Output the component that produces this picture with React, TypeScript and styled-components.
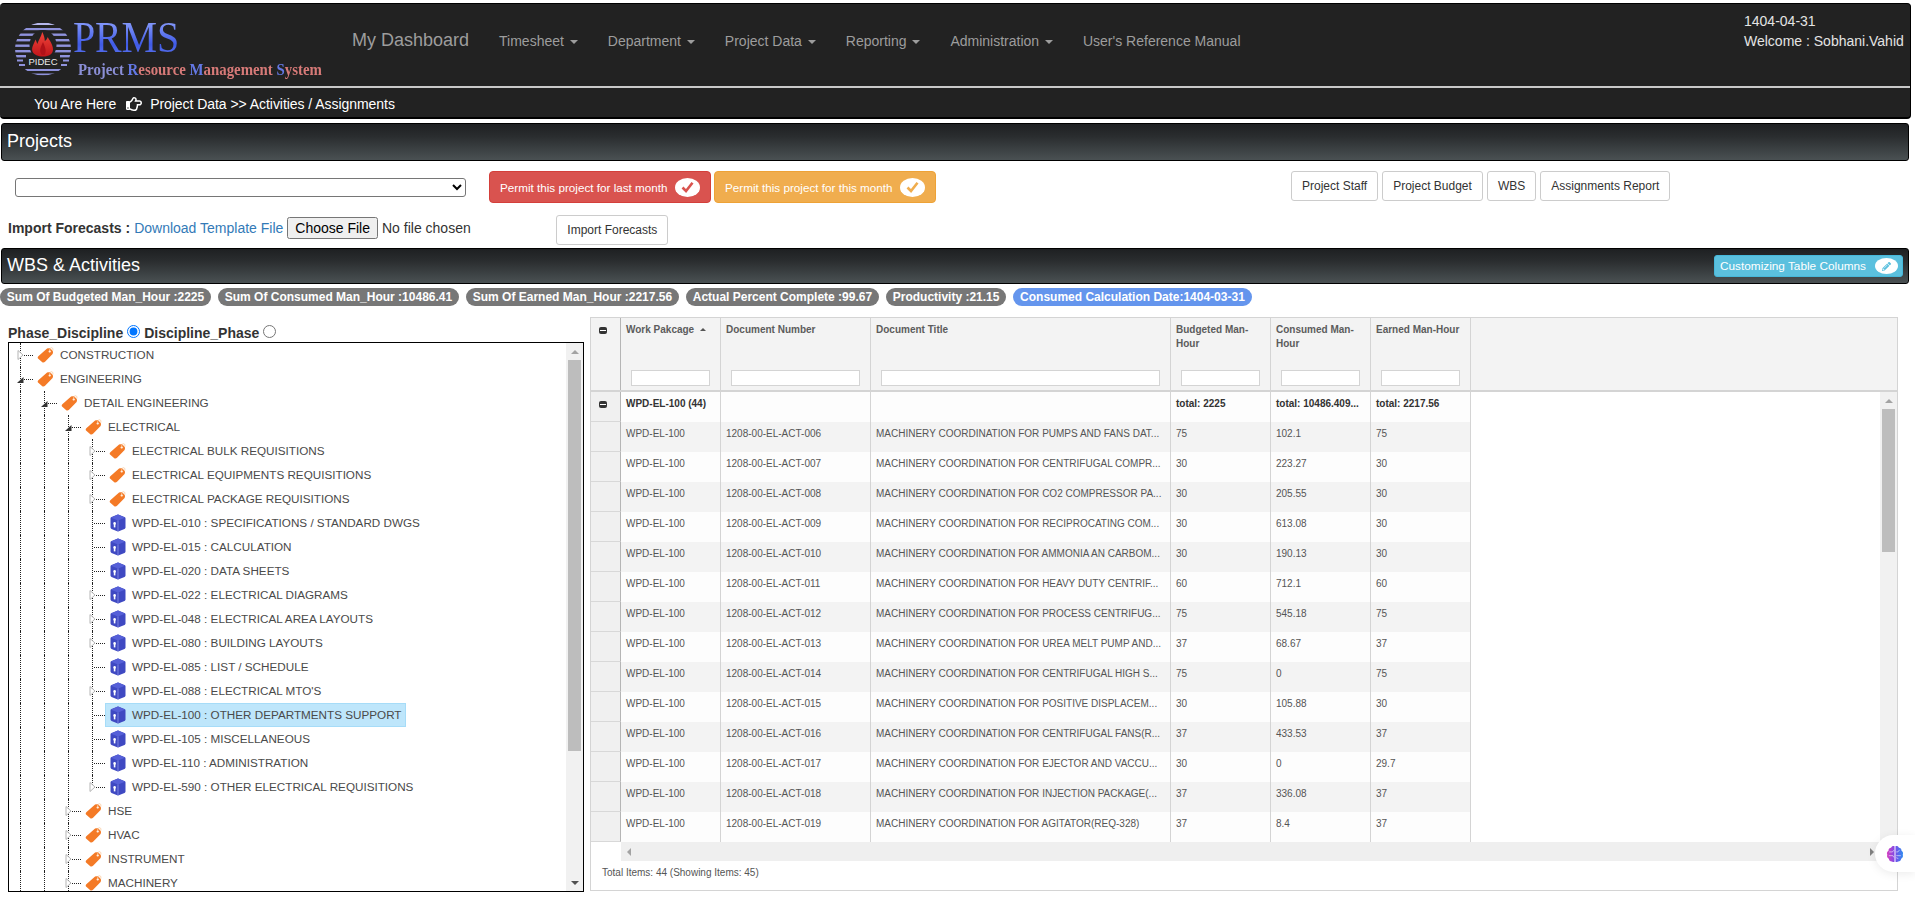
import React from 'react';
import styled, { createGlobalStyle } from 'styled-components';
import { FaRegHandPointRight, FaPencilAlt } from 'react-icons/fa';

const Global = createGlobalStyle`
  html, body { margin: 0; padding: 0; background: #fff; overflow: hidden; }
  body { font-family: "Liberation Sans", Arial, sans-serif; font-size: 14px; color: #333; }
  * { box-sizing: border-box; }
`;

const Page = styled.div`
  padding-top: 3px;
  width: 1915px;
  height: 901px;
`;

const Header = styled.header`
  background: #222;
  border: 1px solid #000;
  border-width: 1px 1px 2px 0;
  border-radius: 4px;
  height: 116px;
  margin-right: 4px;
  display: flex;
  flex-direction: column;
`;
const NavRow = styled.div`
  height: 82px;
  display: flex;
  align-items: flex-start;
`;
const LogoBox = styled.div`
  width: 337px;
  height: 82px;
  flex: none;
  padding: 18px 0 0 15px;
  display: flex;
`;
const LogoWords = styled.div`
  margin-left: 1px;
  display: flex;
  flex-direction: column;
`;
const Prms = styled.div`
  font-family: "Liberation Serif", serif;
  font-size: 40px;
  line-height: 36px;
  height: 37px;
  background: linear-gradient(180deg, #93a6ff 0%, #3f5ae6 65%, #6078ee 100%);
  -webkit-background-clip: text;
  background-clip: text;
  color: transparent;
  letter-spacing: -0.2px;
  transform: scaleY(1.12);
  transform-origin: center bottom;
`;
const LogoTag = styled.div`
  font-family: "Liberation Serif", serif;
  font-weight: 700;
  font-size: 17px;
  line-height: 19px;
  margin: 1px 0 0 5px;
  white-space: nowrap;
  transform: scaleX(0.873);
  transform-origin: left center;
`;
const TagBlue = styled.span` color: #6478e4; `;
const TagViolet = styled.span` color: #8b8fd6; `;
const TagRose = styled.span` color: #d77a78; `;
const Brand = styled.a`
  font-size: 18px;
  color: #9d9d9d;
  padding: 0 15px;
  line-height: 20px;
  margin-top: 26px;
  white-space: nowrap;
`;
const NavLink = styled.a`
  font-size: 14px;
  color: #9d9d9d;
  padding: 0 15px;
  line-height: 20px;
  margin-top: 27px;
  white-space: nowrap;
`;
const Caret = styled.span`
  display: inline-block;
  width: 0;
  height: 0;
  margin-left: 2px;
  vertical-align: middle;
  border-top: 4px solid #9d9d9d;
  border-left: 4px solid transparent;
  border-right: 4px solid transparent;
`;
const UserBox = styled.div`
  margin-left: auto;
  padding: 7px 0 0 0;
  width: 166px;
  color: #e4e4e4;
  font-size: 14px;
  line-height: 20px;
  white-space: nowrap;
`;
const Rule = styled.div`
  height: 2px;
  background: #c8c8c8;
`;
const Crumbs = styled.div`
  flex: 1;
  display: flex;
  align-items: center;
  padding: 2px 0 0 34px;
  color: #fff;
  font-size: 14px;
  letter-spacing: -0.05px;
  white-space: nowrap;
`;
const HandIcon = styled(FaRegHandPointRight)`
  margin: 0 8px 0 10px;
  width: 16px;
  height: 16px;
`;

const SectionBar = styled.div<{ $h: number; $top: number }>`
  height: ${p => p.$h}px;
  margin: ${p => p.$top}px 6px 0 1px;
  border: 1px solid #000;
  border-radius: 3px;
  background: linear-gradient(180deg, #1e2022 0%, #2a2d2f 35%, #4a5153 100%);
  color: #fff;
  font-size: 18px;
  line-height: 20px;
  display: flex;
  align-items: center;
  justify-content: space-between;
  padding: 0 5px 2px 5px;
`;

const ProjectRow = styled.div`
  display: flex;
  align-items: flex-start;
  padding: 10px 0 0 15px;
`;
const ProjectSelect = styled.select`
  width: 451px;
  height: 19px;
  margin: 7px 23px 0 0;
  border: 1px solid #767676;
  border-radius: 3px;
  background: #fff;
  font-size: 12px;
`;
const PermitButton = styled.button<{ $bg: string; $line: string }>`
  width: 222px;
  height: 32px;
  margin-right: 3px;
  border: 1px solid ${p => p.$line};
  border-radius: 4px;
  background: ${p => p.$bg};
  color: #fff;
  font: 11.7px "Liberation Sans", Arial, sans-serif;
  display: flex;
  align-items: center;
  justify-content: space-between;
  padding: 0 10px;
  white-space: nowrap;
`;
const Oval = styled.span<{ $w: number; $h: number }>`
  width: ${p => p.$w}px;
  height: ${p => p.$h}px;
  border-radius: 50%;
  background: #fff;
  display: flex;
  align-items: center;
  justify-content: center;
  flex: none;
`;
const ActionGroup = styled.div`
  margin-left: 352px;
  display: flex;
  gap: 4px;
`;
const PlainButton = styled.button`
  height: 30px;
  padding: 0 10px;
  border: 1px solid #ccc;
  border-radius: 3px;
  background: #fff;
  color: #333;
  font: 12px "Liberation Sans", Arial, sans-serif;
  white-space: nowrap;
`;
const ImportRow = styled.div`
  display: flex;
  align-items: flex-start;
  padding: 12px 0 0 8px;
  height: 45px;
`;
const ImportLabel = styled.b`
  font-size: 14px;
  line-height: 22px;
  margin-top: 2px;
  color: #333;
  white-space: nowrap;
`;
const TemplateLink = styled.a`
  color: #337ab7;
  font-size: 14px;
  line-height: 24px;
  margin: 1px 4px 0 4px;
  white-space: nowrap;
`;
const FileInput = styled.input`
  width: 259px;
  font: 14px "Liberation Sans", Arial, sans-serif;
  margin: 2px 0 0;
  color: #333;
`;
const ImportWrap = styled.div`
  margin-left: 10px;
`;
const ImportBtn = styled(PlainButton)`
  width: 112px;
`;
const CustomButton = styled.button`
  width: 189px;
  height: 22px;
  margin-top: 2px;
  border: 1px solid #46b8da;
  border-radius: 3px;
  background: #5bc0de;
  color: #fff;
  font: 11.8px "Liberation Sans", Arial, sans-serif;
  display: flex;
  align-items: center;
  justify-content: space-between;
  padding: 0 4px 0 5px;
  white-space: nowrap;
`;
const PillRow = styled.div`
  display: flex;
  gap: 7px;
  margin-top: 4px;
  height: 18px;
`;
const Pill = styled.span<{ $blue?: boolean }>`
  background: ${p => (p.$blue ? '#6495ed' : '#777')};
  color: #fff;
  font-weight: 700;
  font-size: 12px;
  line-height: 18px;
  padding: 0 6.8px;
  border-radius: 9px;
  white-space: nowrap;
`;

const Main = styled.div`
  display: flex;
  margin-top: 11px;
  padding-left: 8px;
  align-items: flex-start;
`;
const LeftColumn = styled.div`
  width: 576px;
  flex: none;
`;
const ModeRow = styled.div`
  height: 25px;
  display: flex;
  align-items: flex-end;
  font-size: 14px;
  font-weight: 700;
  color: #333;
  line-height: 18px;
`;
const ModeRadio = styled.input`
  width: 13px;
  height: 13px;
  margin: 0 4px 4px 4px;
`;
const TreeBox = styled.div`
  height: 550px;
  border: 1px solid #000;
  display: flex;
  background: #fff;
`;
const TreeBody = styled.div`
  flex: 1;
  overflow: hidden;
  padding-left: 11px;
`;
const TreeRow = styled.div`
  height: 24px;
  display: flex;
  align-items: center;
`;
const Guide = styled.span`
  width: 24px;
  height: 24px;
  flex: none;
  border-left: 1px dotted #222;
`;
const Connector = styled.span<{ $last?: boolean }>`
  position: relative;
  width: 13px;
  height: 24px;
  flex: none;
  display: flex;
  align-items: center;
  &::before {
    content: '';
    position: absolute;
    left: 0;
    top: 0;
    bottom: ${p => (p.$last ? '12px' : '0')};
    border-left: 1px dotted #222;
  }
`;
const Stub = styled.span`
  display: block;
  margin-left: 2px;
  width: 11px;
  border-top: 1px dotted #222;
`;
const Expander = styled.svg`
  position: absolute;
  left: -3px;
  top: 6px;
`;
const TreeNode = styled.span<{ $on?: boolean }>`
  height: 24px;
  display: flex;
  align-items: center;
  gap: 6px;
  padding: 0 3px 1px 4px;
  border: 1px solid ${p => (p.$on ? '#a6dcf8' : 'transparent')};
  background: ${p => (p.$on ? '#bee6fb' : 'transparent')};
  font-size: 11.7px;
  color: #4a4a4a;
  white-space: nowrap;
`;

const VBar = styled.div`
  width: 17px;
  flex: none;
  background: #f1f1f1;
  display: flex;
  flex-direction: column;
  align-items: center;
`;
const ArrowCell = styled.div`
  width: 17px;
  height: 17px;
  flex: none;
  display: flex;
  align-items: center;
  justify-content: center;
`;
const ArrowUp = styled.span<{ $dim?: boolean }>`
  border-left: 4px solid transparent;
  border-right: 4px solid transparent;
  border-bottom: 4px solid ${p => (p.$dim ? '#a3a3a3' : '#505050')};
`;
const ArrowDown = styled.span`
  border-left: 4px solid transparent;
  border-right: 4px solid transparent;
  border-top: 4px solid #505050;
`;
const ArrowLeft = styled.span`
  border-top: 4px solid transparent;
  border-bottom: 4px solid transparent;
  border-right: 4px solid #a3a3a3;
`;
const ArrowRight = styled.span`
  border-top: 4px solid transparent;
  border-bottom: 4px solid transparent;
  border-left: 4px solid #808080;
`;
const Thumb = styled.div<{ $h: number }>`
  width: 13px;
  height: ${p => p.$h}px;
  background: #bdbdbd;
  flex: none;
`;
const BarFill = styled.div`
  flex: 1;
`;

const Grid = styled.div`
  width: 1308px;
  height: 574px;
  margin-left: 6px;
  flex: none;
  border: 1px solid #d4d4d4;
  background: #fff;
  display: flex;
  flex-direction: column;
`;
const HeadRow = styled.div`
  height: 74px;
  flex: none;
  display: flex;
  background: #f3f3f3;
  border-bottom: 2px solid #d4d4d4;
`;
const SelHead = styled.div`
  width: 30px;
  flex: none;
  border-right: 1px solid #b5b5b5;
  padding: 9px 0 0 8px;
`;
const Minus = styled.span`
  display: block;
  width: 8px;
  height: 7px;
  border-radius: 2px;
  background: #333;
  position: relative;
  &::after {
    content: '';
    position: absolute;
    left: 1px;
    right: 1px;
    top: 3px;
    height: 1px;
    background: #fff;
  }
`;
const HeadCell = styled.div<{ $w: number }>`
  width: ${p => p.$w}px;
  flex: none;
  border-right: 1px solid #d4d4d4;
  padding: 5px 0 4px;
  display: flex;
  flex-direction: column;
  justify-content: space-between;
`;
const HeadLabel = styled.div`
  padding: 0 5px;
  font-size: 10px;
  line-height: 14px;
  font-weight: 700;
  color: #5c5c5c;
`;
const SortMark = styled.span`
  display: inline-block;
  margin-left: 6px;
  vertical-align: 2px;
  border-left: 3px solid transparent;
  border-right: 3px solid transparent;
  border-bottom: 3px solid #555;
`;
const FilterInput = styled.input`
  display: block;
  margin: 0 10px;
  width: calc(100% - 20px);
  height: 16px;
  border: 1px solid #d4d4d4;
  background: #fff;
  padding: 0 2px;
`;
const GridBody = styled.div`
  display: flex;
  height: 469px;
  flex: none;
`;
const RowsArea = styled.div`
  flex: 1;
  min-width: 0;
  display: flex;
  flex-direction: column;
`;
const Rows = styled.div`
  height: 450px;
  overflow: hidden;
`;
const DataRow = styled.div`
  height: 30px;
  display: flex;
`;
const SelCell = styled.div<{ $group?: boolean }>`
  width: 30px;
  flex: none;
  background: #f0f0f0;
  border-right: 1px solid #b5b5b5;
  border-bottom: 1px solid #d8d8d8;
  padding: ${p => (p.$group ? '9px 0 0 8px' : '0')};
`;
const Cell = styled.div<{ $w: number; $shade?: boolean; $bold?: boolean }>`
  width: ${p => p.$w}px;
  flex: none;
  border-right: 1px solid #d4d4d4;
  background: ${p => (p.$shade ? '#f3f3f3' : '#fdfdfd')};
  padding: 5px 5px 0;
  font-size: 10px;
  line-height: 14px;
  color: ${p => (p.$bold ? '#333' : '#555')};
  font-weight: ${p => (p.$bold ? 700 : 400)};
  white-space: nowrap;
  overflow: hidden;
`;
const HBar = styled.div`
  height: 19px;
  margin-left: 30px;
  background: #efefef;
  display: flex;
  align-items: center;
  justify-content: space-between;
  padding: 0 6px;
`;
const GridFooter = styled.div`
  flex: 1;
  padding: 5px 0 0 11px;
  font-size: 10px;
  line-height: 14px;
  color: #555;
`;

const BrainBadge = styled.div`
  position: fixed;
  right: 0;
  top: 835px;
  width: 40px;
  height: 37px;
  background: #fff;
  border-radius: 19px 0 0 19px;
  box-shadow: 0 2px 10px rgba(0, 0, 0, 0.08);
  display: flex;
  align-items: center;
  padding-left: 10px;
`;

const TagIcon = () => (
  <svg width="17" height="16" viewBox="0 0 17 16" style={{ flex: 'none', marginLeft: -1 }}>
    <path d="M1.300 9.200 9.800 1.800C10.300 1.400 12.700 1 13.400 1.500L15.800 4C16.200 4.600 16 6.300 15.600 7L8.300 14.600C7 15.800 5.900 15.800 5 15L1.300 11.800C.5 11 .5 10 1.300 9.200z" fill="#f47a26" />
    <circle cx="12.700" cy="4.500" r="1.100" fill="#fff" />
    <path d="M12.700 4.500C12.300 2 13.500.4 14.800.7 16 1 16.400 2.600 15.400 4.200" fill="none" stroke="#fbd3ad" strokeWidth="0.9" />
  </svg>
);

const BoxIcon = () => (
  <svg width="16" height="18" viewBox="0 0 16 18" style={{ flex: 'none' }}>
    <path d="M7.200.7a2 2 0 0 1 1.600 0l5.700 2.200c.6.2 1 .8 1 1.400v9.300c0 .6-.4 1.200-1 1.400l-5.700 2.300a2 2 0 0 1-1.600 0l-5.700-2.300c-.6-.2-1-.8-1-1.400V4.300c0-.6.4-1.200 1-1.400z" fill="#3f49c2" />
    <path d="M1 3.700 7.200.7a2 2 0 0 1 1.600 0L15 3.700 8 6.500z" fill="#5660d8" />
    <path d="M8 6.500V17" fill="none" stroke="#8e96ea" strokeWidth="0.8" />
    <circle cx="4.600" cy="9.400" r="1.300" fill="#fff" />
    <rect x="3.800" y="9.700" width="1.600" height="3.700" fill="#fff" />
  </svg>
);

const CheckMark = ({ color }: { color: string }) => (
  <svg width="13" height="12" viewBox="0 0 13 12">
    <path d="M1.500 6.500 5 10 11.500 1.800" fill="none" stroke={color} strokeWidth="2.600" />
  </svg>
);

const LogoMark = () => (
  <svg width="57" height="54" viewBox="0 0 57 54" style={{ flex: 'none' }}>
    <defs>
      <clipPath id="disc"><ellipse cx="28" cy="27" rx="28" ry="26.500" /></clipPath>
      <linearGradient id="flame" x1="0" x2="0" y1="0" y2="1">
        <stop offset="0" stopColor="#f0443a" />
        <stop offset="1" stopColor="#c0161a" />
      </linearGradient>
    </defs>
    <g clipPath="url(#disc)" fill="#8f92dc">
      <rect x="0" y="1" width="57" height="2" fill="#b6b8ec" />
      <rect x="0" y="6" width="57" height="2.200" />
      <rect x="0" y="11.500" width="57" height="2.400" />
      <rect x="0" y="17" width="57" height="2.400" />
      <rect x="0" y="22.500" width="57" height="2.400" />
      <rect x="0" y="28" width="57" height="2.400" />
      <rect x="0" y="33" width="57" height="2.400" />
      <rect x="0" y="47" width="57" height="2" />
      <rect x="0" y="51.500" width="57" height="1.800" />
    </g>
    <ellipse cx="28" cy="23" rx="13.500" ry="15" fill="#222" />
    <rect x="11" y="33" width="34" height="14" fill="#222" />
    <path d="M2 38.500h6M48 38.500h6M4 43h6M46 43h6" stroke="#8f92dc" strokeWidth="2" />
    <path d="M17.500 29.500C16 25 19.500 21 20.500 17.500 21.300 19 21.800 20.500 22.300 22 23.500 18 26 15 27.300 10 29 13.500 29.700 16 29.800 19 31.300 18 32.300 16.500 32.800 15 34 18 38 22 38 27.500 38 32 34 34.500 28 34.500 23 34.500 19 33 17.500 29.500z" fill="url(#flame)" />
    <path d="M27 33C24 30 25 26 28 20 30 25 32 29 29.500 33z" fill="#b01218" />
    <text x="28" y="42.500" textAnchor="middle" fontSize="9.500" fill="#ececec" fontFamily="Liberation Sans, Arial, sans-serif">PIDEC</text>
  </svg>
);

const BrainIcon = () => (
  <svg width="20" height="20" viewBox="0 0 24 24">
    <defs>
      <linearGradient id="brainFill" x1="0" x2="1" y1="0" y2="0">
        <stop offset="0" stopColor="#d63fc0" />
        <stop offset="0.5" stopColor="#7a4be8" />
        <stop offset="1" stopColor="#2f8df0" />
      </linearGradient>
    </defs>
    <path
      fill="url(#brainFill)"
      d="M11.400 2.600C9.700 1.900 7.900 2.800 7.300 4.400 5.300 4.500 3.900 6.200 4.200 8.100 2.500 9 1.800 11.100 2.700 12.800 1.900 14.700 2.800 16.800 4.600 17.600 4.700 19.700 6.500 21.200 8.500 20.900 9.400 21.900 10.500 21.900 11.400 21.200ZM12.600 2.600C14.300 1.900 16.100 2.800 16.700 4.400 18.700 4.500 20.100 6.200 19.800 8.100 21.500 9 22.200 11.100 21.300 12.800 22.100 14.700 21.200 16.800 19.400 17.600 19.300 19.700 17.500 21.200 15.500 20.900 14.600 21.900 13.500 21.900 12.600 21.200Z"
    />
    <path d="M5 9.500h4l1.500-2M4.500 14h5l1 2M17.500 7l-2 2.500h-2M19 14h-5.500M16 17.500l-2.500-1" fill="none" stroke="#fff" strokeWidth="0.9" opacity="0.75" />
  </svg>
);

type Exp = 'open' | 'closed' | undefined;
type Node = { label: string; depth: number; kind: 'tag' | 'box'; exp?: Exp; last?: boolean; on?: boolean };

const tree: Node[] = [
  { label: 'CONSTRUCTION', depth: 0, kind: 'tag', exp: 'closed' },
  { label: 'ENGINEERING', depth: 0, kind: 'tag', exp: 'open' },
  { label: 'DETAIL ENGINEERING', depth: 1, kind: 'tag', exp: 'open' },
  { label: 'ELECTRICAL', depth: 2, kind: 'tag', exp: 'open' },
  { label: 'ELECTRICAL BULK REQUISITIONS', depth: 3, kind: 'tag', exp: 'closed' },
  { label: 'ELECTRICAL EQUIPMENTS REQUISITIONS', depth: 3, kind: 'tag', exp: 'closed' },
  { label: 'ELECTRICAL PACKAGE REQUISITIONS', depth: 3, kind: 'tag', exp: 'closed' },
  { label: 'WPD-EL-010 : SPECIFICATIONS / STANDARD DWGS', depth: 3, kind: 'box' },
  { label: 'WPD-EL-015 : CALCULATION', depth: 3, kind: 'box' },
  { label: 'WPD-EL-020 : DATA SHEETS', depth: 3, kind: 'box' },
  { label: 'WPD-EL-022 : ELECTRICAL DIAGRAMS', depth: 3, kind: 'box', exp: 'closed' },
  { label: 'WPD-EL-048 : ELECTRICAL AREA LAYOUTS', depth: 3, kind: 'box', exp: 'closed' },
  { label: 'WPD-EL-080 : BUILDING LAYOUTS', depth: 3, kind: 'box', exp: 'closed' },
  { label: 'WPD-EL-085 : LIST / SCHEDULE', depth: 3, kind: 'box' },
  { label: "WPD-EL-088 : ELECTRICAL MTO'S", depth: 3, kind: 'box', exp: 'closed' },
  { label: 'WPD-EL-100 : OTHER DEPARTMENTS SUPPORT', depth: 3, kind: 'box', on: true },
  { label: 'WPD-EL-105 : MISCELLANEOUS', depth: 3, kind: 'box' },
  { label: 'WPD-EL-110 : ADMINISTRATION', depth: 3, kind: 'box' },
  { label: 'WPD-EL-590 : OTHER ELECTRICAL REQUISITIONS', depth: 3, kind: 'box', exp: 'closed', last: true },
  { label: 'HSE', depth: 2, kind: 'tag', exp: 'closed' },
  { label: 'HVAC', depth: 2, kind: 'tag', exp: 'closed' },
  { label: 'INSTRUMENT', depth: 2, kind: 'tag', exp: 'closed' },
  { label: 'MACHINERY', depth: 2, kind: 'tag', exp: 'closed' },
];

const cols = [100, 150, 300, 100, 100, 100];

const rows: [string, string, string, string, string][] = [
  ['006', 'PUMPS AND FANS DAT...', '75', '102.1', '75'],
  ['007', 'CENTRIFUGAL COMPR...', '30', '223.27', '30'],
  ['008', 'CO2 COMPRESSOR PA...', '30', '205.55', '30'],
  ['009', 'RECIPROCATING COM...', '30', '613.08', '30'],
  ['010', 'AMMONIA AN CARBOM...', '30', '190.13', '30'],
  ['011', 'HEAVY DUTY CENTRIF...', '60', '712.1', '60'],
  ['012', 'PROCESS CENTRIFUG...', '75', '545.18', '75'],
  ['013', 'UREA MELT PUMP AND...', '37', '68.67', '37'],
  ['014', 'CENTRIFUGAL HIGH S...', '75', '0', '75'],
  ['015', 'POSITIVE DISPLACEM...', '30', '105.88', '30'],
  ['016', 'CENTRIFUGAL FANS(R...', '37', '433.53', '37'],
  ['017', 'EJECTOR AND VACCU...', '30', '0', '29.7'],
  ['018', 'INJECTION PACKAGE(...', '37', '336.08', '37'],
  ['019', 'AGITATOR(REQ-328)', '37', '8.4', '37'],
];

const headers = ['Work Pakcage', 'Document Number', 'Document Title', 'Budgeted Man-Hour', 'Consumed Man-Hour', 'Earned Man-Hour'];
const navItems = ['Timesheet', 'Department', 'Project Data', 'Reporting', 'Administration'];
const pills = [
  'Sum Of Budgeted Man_Hour :2225',
  'Sum Of Consumed Man_Hour :10486.41',
  'Sum Of Earned Man_Hour :2217.56',
  'Actual Percent Complete :99.67',
  'Productivity :21.15',
];

export default function App() {
  return (
    <Page>
      <Global />
      <Header>
        <NavRow>
          <LogoBox>
            <LogoMark />
            <LogoWords>
              <Prms>PRMS</Prms>
              <LogoTag>
                <TagViolet>Project </TagViolet>
                <TagBlue>R</TagBlue><TagRose>esource </TagRose>
                <TagBlue>M</TagBlue><TagRose>anagement </TagRose>
                <TagBlue>S</TagBlue><TagRose>ystem</TagRose>
              </LogoTag>
            </LogoWords>
          </LogoBox>
          <Brand>My Dashboard</Brand>
          {navItems.map(n => (
            <NavLink key={n}>{n} <Caret /></NavLink>
          ))}
          <NavLink>User's Reference Manual</NavLink>
          <UserBox>
            <div>1404-04-31</div>
            Welcome : Sobhani.Vahid
          </UserBox>
        </NavRow>
        <Rule />
        <Crumbs>
          You Are Here
          <HandIcon />
          Project Data &gt;&gt; Activities / Assignments
        </Crumbs>
      </Header>

      <SectionBar $h={38} $top={4}>Projects</SectionBar>
      <ProjectRow>
        <ProjectSelect><option></option></ProjectSelect>
        <PermitButton $bg="#d9534f" $line="#d43f3a">
          Permit this project for last month
          <Oval $w={25} $h={19}><CheckMark color="#d9534f" /></Oval>
        </PermitButton>
        <PermitButton $bg="#f0ad4e" $line="#eea236">
          Permit this project for this month
          <Oval $w={25} $h={19}><CheckMark color="#f0ad4e" /></Oval>
        </PermitButton>
        <ActionGroup>
          <PlainButton>Project Staff</PlainButton>
          <PlainButton>Project Budget</PlainButton>
          <PlainButton>WBS</PlainButton>
          <PlainButton>Assignments Report</PlainButton>
        </ActionGroup>
      </ProjectRow>
      <ImportRow>
        <ImportLabel>Import Forecasts :</ImportLabel>
        <TemplateLink>Download Template File</TemplateLink>
        <FileInput type="file" />
        <ImportWrap><ImportBtn>Import Forecasts</ImportBtn></ImportWrap>
      </ImportRow>

      <SectionBar $h={36} $top={0}>
        WBS &amp; Activities
        <CustomButton>
          Customizing Table Columns
          <Oval $w={23} $h={16}><FaPencilAlt size={9} color="#5bc0de" /></Oval>
        </CustomButton>
      </SectionBar>
      <PillRow>
        {pills.map(p => <Pill key={p}>{p}</Pill>)}
        <Pill $blue>Consumed Calculation Date:1404-03-31</Pill>
      </PillRow>

      <Main>
        <LeftColumn>
          <ModeRow>
            Phase_Discipline<ModeRadio type="radio" name="mode" defaultChecked />
            Discipline_Phase<ModeRadio type="radio" name="mode" />
          </ModeRow>
          <TreeBox>
            <TreeBody>
              {tree.map(n => (
                <TreeRow key={n.label}>
                  {Array.from({ length: n.depth }, (_, i) => <Guide key={i} />)}
                  <Connector $last={n.last}>
                    <Stub />
                    {n.exp === 'closed' && (
                      <Expander width="7" height="12" viewBox="0 0 7 12">
                        <path d="M1 1.500 6 6 1 10.500z" fill="#fff" stroke="#b5b5b5" />
                      </Expander>
                    )}
                    {n.exp === 'open' && (
                      <Expander width="7" height="12" viewBox="0 0 7 12">
                        <path d="M0 10 6.500 4V10z" fill="#333" />
                      </Expander>
                    )}
                  </Connector>
                  <TreeNode $on={n.on}>
                    {n.kind === 'tag' ? <TagIcon /> : <BoxIcon />}
                    {n.label}
                  </TreeNode>
                </TreeRow>
              ))}
            </TreeBody>
            <VBar>
              <ArrowCell><ArrowUp $dim /></ArrowCell>
              <Thumb $h={391} />
              <BarFill />
              <ArrowCell><ArrowDown /></ArrowCell>
            </VBar>
          </TreeBox>
        </LeftColumn>

        <Grid>
          <HeadRow>
            <SelHead><Minus /></SelHead>
            {headers.map((h, i) => (
              <HeadCell key={h} $w={cols[i]}>
                <HeadLabel>
                  {h}
                  {i === 0 && <SortMark />}
                </HeadLabel>
                <FilterInput />
              </HeadCell>
            ))}
          </HeadRow>
          <GridBody>
            <RowsArea>
              <Rows>
                <DataRow>
                  <SelCell $group><Minus /></SelCell>
                  <Cell $w={cols[0]} $bold>WPD-EL-100 (44)</Cell>
                  <Cell $w={cols[1]} />
                  <Cell $w={cols[2]} />
                  <Cell $w={cols[3]} $bold>total: 2225</Cell>
                  <Cell $w={cols[4]} $bold>total: 10486.409...</Cell>
                  <Cell $w={cols[5]} $bold>total: 2217.56</Cell>
                </DataRow>
                {rows.map((r, i) => (
                  <DataRow key={r[0]}>
                    <SelCell />
                    <Cell $w={cols[0]} $shade={i % 2 === 0}>WPD-EL-100</Cell>
                    <Cell $w={cols[1]} $shade={i % 2 === 0}>1208-00-EL-ACT-{r[0]}</Cell>
                    <Cell $w={cols[2]} $shade={i % 2 === 0}>MACHINERY COORDINATION FOR {r[1]}</Cell>
                    <Cell $w={cols[3]} $shade={i % 2 === 0}>{r[2]}</Cell>
                    <Cell $w={cols[4]} $shade={i % 2 === 0}>{r[3]}</Cell>
                    <Cell $w={cols[5]} $shade={i % 2 === 0}>{r[4]}</Cell>
                  </DataRow>
                ))}
              </Rows>
              <HBar><ArrowLeft /><ArrowRight /></HBar>
            </RowsArea>
            <VBar>
              <ArrowCell><ArrowUp $dim /></ArrowCell>
              <Thumb $h={143} />
              <BarFill />
              <ArrowCell><ArrowDown /></ArrowCell>
            </VBar>
          </GridBody>
          <GridFooter>Total Items: 44 (Showing Items: 45)</GridFooter>
        </Grid>
      </Main>
      <BrainBadge><BrainIcon /></BrainBadge>
    </Page>
  );
}
